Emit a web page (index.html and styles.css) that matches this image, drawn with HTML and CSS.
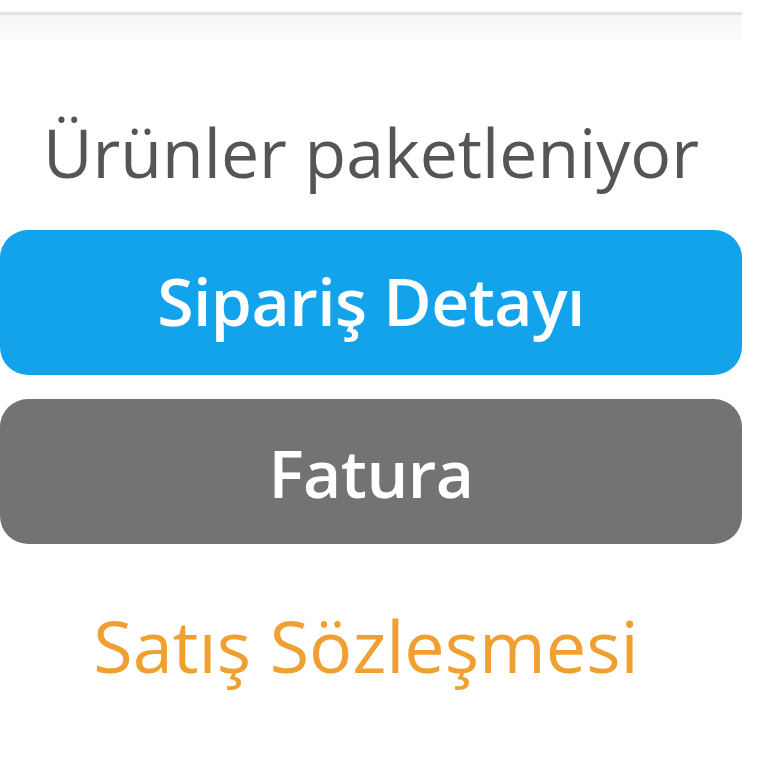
FILE: index.html
```html
<!DOCTYPE html>
<html lang="tr">
<head>
  <meta charset="UTF-8">
  <meta name="viewport" content="width=device-width, initial-scale=1.0">
  <title>Sipariş Durumu</title>
  <link rel="stylesheet" href="styles.css">
</head>
<body>
  <div class="top-rule"></div>

  <div class="order-box">
    <p class="order-status">Ürünler paketleniyor</p>
    <a class="btn btn-blue" href="#">Sipariş Detayı</a>
    <a class="btn btn-gray" href="#">Fatura</a>
    <a class="contract-link" href="#">Satış Sözleşmesi</a>
  </div>
</body>
</html>
```

FILE: styles.css
```css
body {
  margin: 0;
  background: #fff;
  font-family: "Open Sans", "Noto Sans", Arial, sans-serif;
}
.top-rule {
  width: 742px;
  height: 25px;
  margin-top: 12px;
  border-top: 3px solid #e4e4e4;
  background: linear-gradient(#f6f6f6, #fcfcfc);
}
.order-box {
  width: 742px;
  display: flex;
  flex-direction: column;
  align-items: center;
}
.order-status {
  margin: 78px 0 0;
  font-size: 68px;
  line-height: 1;
  color: #555;
  height: 112px;
}
.btn {
  display: flex;
  align-items: center;
  justify-content: center;
  width: 100%;
  height: 145px;
  border-radius: 28px;
  color: #fff;
  font-size: 66px;
  font-weight: 600;
  letter-spacing: -0.5px;
  text-decoration: none;
  padding-bottom: 6px;
  box-sizing: border-box;
}
.btn-blue {
  background: #13a3ea;
}
.btn-gray {
  background: #737373;
  margin-top: 24px;
  padding-bottom: 0;
}
.contract-link {
  margin-top: 52px;
  margin-right: 10px;
  font-size: 72px;
  color: #f0a030;
  text-decoration: none;
}
```
